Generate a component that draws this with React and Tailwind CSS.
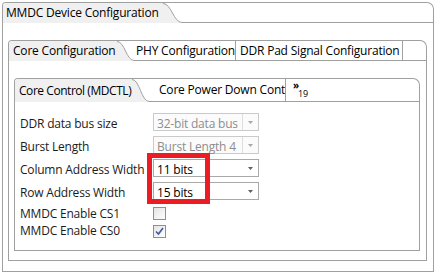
import React from "react";

const line = "border-[#a0a0a0]";

const Curve = ({ w, h }) => (
  <svg width={w} height={h} className="block shrink-0">
    <path
      d={`M0 0 C${w * 0.45} 0 ${w * 0.55} ${h} ${w} ${h} L0 ${h} Z`}
      fill="#f0f0f0"
    />
    <path
      d={`M0 0.5 C${w * 0.45} 0.5 ${w * 0.55} ${h - 0.5} ${w} ${h - 0.5}`}
      stroke="#a0a0a0"
      fill="none"
    />
  </svg>
);

const Arrow = ({ color }) => (
  <svg width="5" height="3" className="block">
    <path d="M0 0 L5 0 L2.5 3 Z" fill={color} />
  </svg>
);

const Combo = ({ value, disabled }) => (
  <div
    className={`w-[106px] h-[18px] border flex items-center ${
      disabled ? "border-[#cacaca] bg-[#fbfbfb] text-[#8d8d8d]" : "border-[#a9a9a9] bg-white text-black"
    }`}
  >
    <span className="flex-1 pl-[3px] pt-[3px] whitespace-nowrap overflow-hidden">{value}</span>
    <div
      className={`w-[16px] h-full flex items-center justify-center ${
        disabled ? "border-l border-[#dedede]" : ""
      }`}
    >
      <Arrow color={disabled ? "#a8a8a8" : "#606060"} />
    </div>
  </div>
);

const Check = ({ checked }) => (
  <div className="w-[13px] h-[13px] border border-[#8e8f8f] bg-gradient-to-br from-[#e4e4e4] to-white">
    {checked && (
      <svg width="11" height="11" className="block">
        <path d="M2 5.5 L4.5 8 L9 2" stroke="#3e5a99" strokeWidth="1.6" fill="none" />
      </svg>
    )}
  </div>
);

const rows = [
  { label: "DDR data bus size", value: "32-bit data bus", disabled: true },
  { label: "Burst Length", value: "Burst Length 4", disabled: true },
  { label: "Column Address Width", value: "11 bits" },
  { label: "Row Address Width", value: "15 bits" },
];

export default function App() {
  return (
    <div className="relative w-[436px] h-[274px] bg-white font-['Open_Sans',sans-serif] text-[12px] leading-[16px] text-black tracking-[-0.2px]">
      <div className="pl-[2px] pt-[2px]">
        {/* outer folder */}
        <div className="w-[432px]">
          <div className={`h-[21px] border-t border-l border-r ${line} rounded-tl-[4px] rounded-tr-[7px] flex overflow-hidden`}>
            <div className="w-[160px] bg-[#f0f0f0] pl-[3px] flex items-center whitespace-nowrap">
              MMDC Device Configuration
            </div>
            <Curve w={19} h={20} />
            <div className={`flex-1 border-b ${line}`} />
          </div>
          <div className={`h-[249px] border-l border-r border-b ${line} pl-[5px] pt-[17px]`}>
            {/* second folder */}
            <div className="w-[419px]">
              <div className={`h-[21px] border-t border-l border-r ${line} rounded-tl-[4px] rounded-tr-[7px] flex overflow-hidden`}>
                <div className="w-[108px] bg-[#f0f0f0] pl-[4px] flex items-center whitespace-nowrap">
                  Core Configuration
                </div>
                <Curve w={17} h={20} />
                <div className={`flex-1 flex border-b ${line}`}>
                  <div className={`w-[102px] border-r ${line} pl-[2px] flex items-center whitespace-nowrap overflow-hidden`}>
                    PHY Configuration
                  </div>
                  <div className={`w-[167px] border-r ${line} pl-[4px] flex items-center whitespace-nowrap overflow-hidden`}>
                    DDR Pad Signal Configuration
                  </div>
                </div>
              </div>
              <div className={`h-[200px] border-l border-r border-b ${line} pl-[5px] pt-[17px]`}>
                {/* third folder */}
                <div className="w-[406px]">
                  <div className={`h-[24px] border-t border-l border-r ${line} rounded-tl-[4px] rounded-tr-[7px] flex overflow-hidden`}>
                    <div className="w-[117px] bg-[#f0f0f0] pl-[4px] flex items-center whitespace-nowrap tracking-[-0.45px]">
                      Core Control (MDCTL)
                    </div>
                    <Curve w={17} h={23} />
                    <div className={`flex-1 flex border-b ${line}`}>
                      <div className={`w-[137px] border-r ${line} pl-[10px] flex items-center whitespace-nowrap overflow-hidden`}>
                        Core Power Down Cont
                      </div>
                      <div className="flex-1 flex pl-[7px]">
                        <span className="text-[10px] leading-none font-bold mt-[1px]">»</span>
                        <span className="text-[9px] leading-none mt-[10px] -ml-[1px]">19</span>
                      </div>
                    </div>
                  </div>
                  <div className={`h-[149px] border-l border-r border-b ${line} pl-[5px] pt-[11px] text-[#1b1b1b]`}>
                    {rows.map((r) => (
                      <div key={r.label} className="h-[18px] mb-[5px] flex items-center">
                        <span className="w-[133px] pt-[3px] whitespace-nowrap">{r.label}</span>
                        <Combo value={r.value} disabled={r.disabled} />
                      </div>
                    ))}
                    <div className="h-[18px] -mt-[1px] flex items-center">
                      <span className="w-[133px] pt-[2px] whitespace-nowrap">MMDC Enable CS1</span>
                      <Check />
                    </div>
                    <div className="h-[18px] flex items-center">
                      <span className="w-[133px] whitespace-nowrap">MMDC Enable CS0</span>
                      <Check checked />
                    </div>
                  </div>
                </div>
              </div>
            </div>
          </div>
        </div>
      </div>
      {/* highlight */}
      <div className="absolute left-[147px] top-[153px] w-[63px] h-[51px] border-[5px] border-[#ec1c24]" />
    </div>
  );
}
